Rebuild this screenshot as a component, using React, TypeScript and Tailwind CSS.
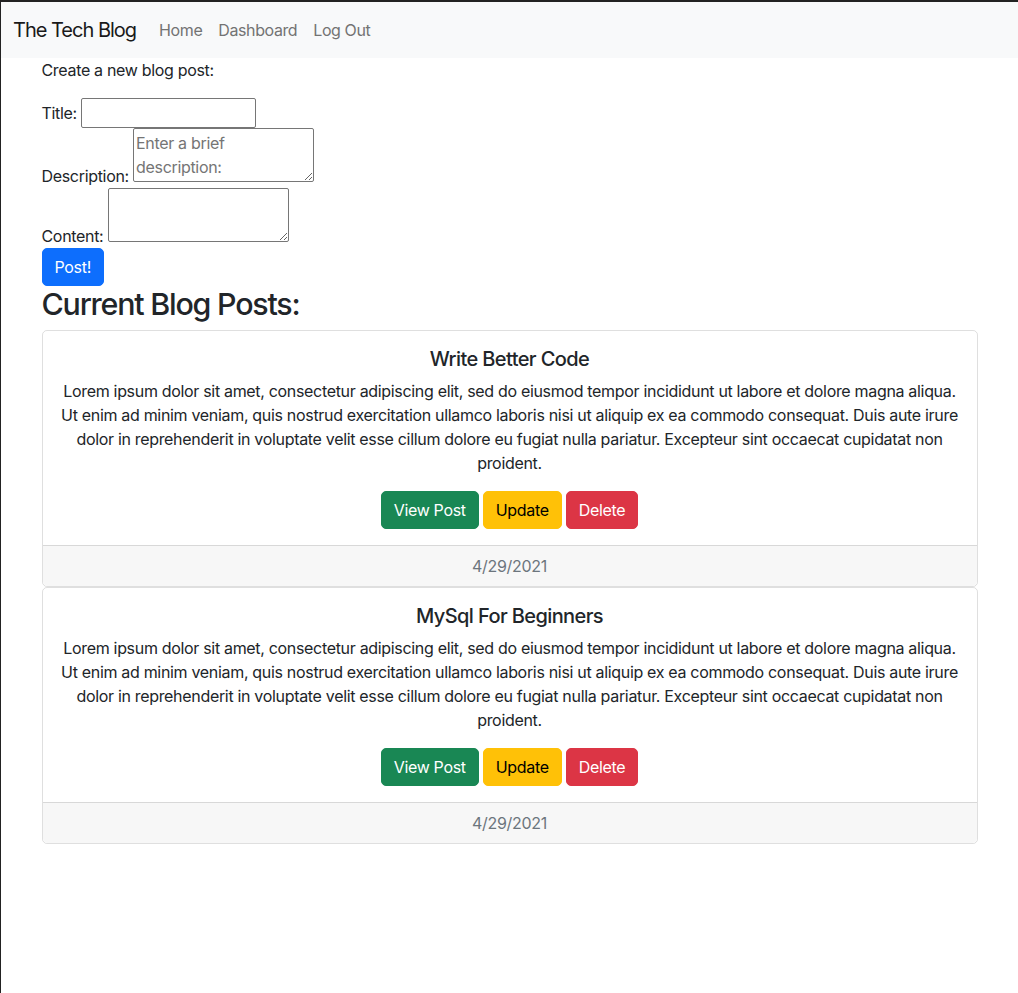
import React from 'react';

const posts = [
  { id: 1, title: 'Write Better Code', date: '4/29/2021' },
  { id: 2, title: 'MySql For Beginners', date: '4/29/2021' },
];

const lorem =
  'Lorem ipsum dolor sit amet, consectetur adipiscing elit, sed do eiusmod tempor incididunt ut labore et dolore magna aliqua. Ut enim ad minim veniam, quis nostrud exercitation ullamco laboris nisi ut aliquip ex ea commodo consequat. Duis aute irure dolor in reprehenderit in voluptate velit esse cillum dolore eu fugiat nulla pariatur. Excepteur sint occaecat cupidatat non proident.';

function Navbar() {
  return (
    <nav className="flex items-center bg-[#f8f9fa] py-2 px-3">
      <span className="mr-[15px] py-[5px] text-[20px] leading-[30px] tracking-[-0.05em] text-[#1a1a1a]">The Tech Blog</span>
      <ul className="flex">
        {['Home', 'Dashboard', 'Log Out'].map((l) => (
          <li key={l}>
            <a className="block px-2 py-2 leading-6 tracking-[-0.025em] text-[#737373]">{l}</a>
          </li>
        ))}
      </ul>
    </nav>
  );
}

function NewPostForm() {
  return (
    <div>
      <p className="mb-4">Create a new blog post:</p>
      <form>
        <div>
          <label>Title:</label>{' '}
          <input
            type="text"
            className="h-[30px] w-[175px] rounded-[2px] border border-[#767676] px-[2px] py-[2px] leading-6 align-baseline"
          />
        </div>
        <div>
          <label>Description:</label>{' '}
          <textarea
            placeholder="Enter a brief description:"
            className="h-[54px] w-[181px] rounded-[2px] border border-[#767676] p-[2px] leading-6 align-baseline placeholder:text-[#757575]"
          />
        </div>
        <div>
          <label>Content:</label>{' '}
          <textarea className="h-[54px] w-[181px] rounded-[2px] border border-[#767676] p-[2px] leading-6 align-baseline" />
        </div>
        <div>
          <button
            type="button"
            className="rounded-[5px] border border-[#0d6efd] bg-[#0d6efd] px-3 py-[6px] leading-6 text-white"
          >
            Post!
          </button>
        </div>
      </form>
    </div>
  );
}

function PostCard({ title, date }: { title: string; date: string }) {
  return (
    <div className="rounded-[5px] border border-[rgba(0,0,0,0.125)]">
      <div className="p-4 text-center">
        <h5 className="mb-2 text-[20px] font-medium leading-[1.2] tracking-[-0.03em]">{title}</h5>
        <p className="mb-4">{lorem}</p>
        <div className="flex justify-center gap-1">
          <button className="rounded-[5px] border border-[#198754] bg-[#198754] px-3 py-[6px] leading-6 text-white">
            View Post
          </button>
          <button className="rounded-[5px] border border-[#ffc107] bg-[#ffc107] px-3 py-[6px] leading-6 text-black">
            Update
          </button>
          <button className="rounded-[5px] border border-[#dc3545] bg-[#dc3545] px-3 py-[6px] leading-6 text-white">
            Delete
          </button>
        </div>
      </div>
      <div className="rounded-b-[5px] border-t border-[rgba(0,0,0,0.125)] bg-[#f7f7f7] px-4 py-2 text-center leading-6 text-[#6c757d]">
        {date}
      </div>
    </div>
  );
}

export default function App() {
  return (
    <div
      className="min-h-[993px] border-t-2 border-l border-[#222] bg-white text-[16px] leading-6 tracking-[-0.02em] text-[#212529]"
      style={{ fontFamily: 'Inter, "Noto Sans", sans-serif' }}
    >
      <Navbar />
      <main className="mx-auto max-w-[960px] px-3">
        <NewPostForm />
        <h2 className="mb-2 text-[30.4px] font-medium leading-[1.2] tracking-[-0.04em]">Current Blog Posts:</h2>
        {posts.map((p) => (
          <PostCard key={p.id} title={p.title} date={p.date} />
        ))}
      </main>
    </div>
  );
}
